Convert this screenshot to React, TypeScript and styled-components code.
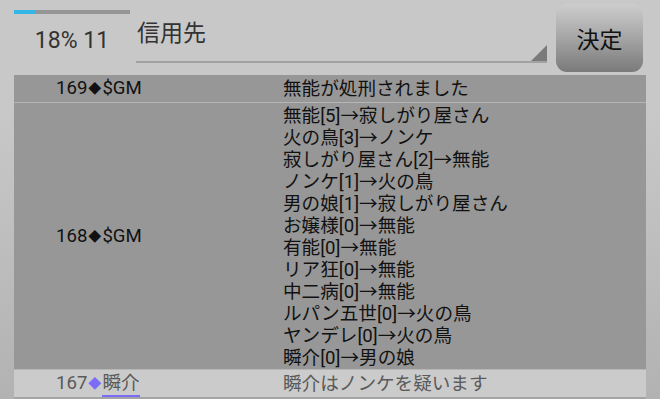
import React from "react";
import styled, { createGlobalStyle } from "styled-components";

const GlobalStyle = createGlobalStyle`
  html, body {
    margin: 0;
    padding: 0;
  }
  body {
    font-family: Roboto, "Noto Sans CJK JP", sans-serif;
    background: #c8c8c8;
  }
`;

const Screen = styled.div`
  width: 660px;
  height: 399px;
  overflow: hidden;
  background: linear-gradient(#c8c8c8 0px, #c8c8c8 110px, #b2b2b2 399px);
`;

const Header = styled.div`
  display: flex;
  align-items: flex-start;
  height: 75px;
  padding: 0 17px 0 14px;
  box-sizing: border-box;
`;

const Status = styled.div`
  width: 116px;
  display: flex;
  flex-direction: column;
  align-items: center;
`;

const ProgressTrack = styled.div`
  width: 100%;
  height: 4px;
  margin-top: 10px;
  background: #959595;
`;

const ProgressFill = styled.div`
  height: 100%;
  background: #33b5e5;
`;

const StatusText = styled.div`
  margin-top: 12px;
  font-size: 23px;
  line-height: 30px;
  color: #333;
`;

const Select = styled.div`
  position: relative;
  flex: 1;
  margin: 16px 9px 0 6px;
  height: 47px;
  border-bottom: 2px solid #a2a2a2;
  box-sizing: border-box;
  padding-left: 1px;
  font-size: 23px;
  line-height: 36px;
  color: #333;

  &::after {
    content: "";
    position: absolute;
    right: 0;
    bottom: 0;
    border-style: solid;
    border-width: 0 0 16px 16px;
    border-color: transparent transparent #7a7a7a transparent;
  }
`;

const Button = styled.div`
  width: 87px;
  height: 68px;
  margin-top: 4px;
  border-radius: 11px;
  background: linear-gradient(#cdcdcd, #a9a9a9 45%, #7a7a7a);
  display: flex;
  align-items: center;
  justify-content: center;
  font-size: 23px;
  color: #111;
`;

const List = styled.div`
  margin: 0 14px;
`;

const Row = styled.div<{ $tone: "dark" | "light" }>`
  display: grid;
  grid-template-columns: 269px 1fr;
  align-items: center;
  font-size: 18.6px;
  background: ${(p) => (p.$tone === "dark" ? "#979797" : "#cbcbcb")};
  color: ${(p) => (p.$tone === "dark" ? "#111" : "#5a5a5a")};
  border-bottom: ${(p) =>
    p.$tone === "dark" ? "1px solid #b6b6b6" : "2px solid #a4a4a4"};
`;

const Speaker = styled.div`
  padding-left: 42px;
  line-height: 26px;
  white-space: nowrap;
`;

const Diamond = styled.span<{ $color?: string }>`
  font-size: 13px;
  margin: 0 1px;
  vertical-align: 1px;
  color: ${(p) => p.$color || "inherit"};
`;

const Name = styled.span<{ $linked?: boolean }>`
  ${(p) =>
    p.$linked
      ? `border-bottom: 2px solid #7b6cf5; padding-bottom: 1px;`
      : ""}
`;

const Messages = styled.div<{ $multi?: boolean }>`
  line-height: ${(p) => (p.$multi ? "22px" : "26px")};
  padding: ${(p) => (p.$multi ? "2px 0 0" : "0")};
  white-space: nowrap;
`;

const votes = [
  "無能[5]→寂しがり屋さん",
  "火の鳥[3]→ノンケ",
  "寂しがり屋さん[2]→無能",
  "ノンケ[1]→火の鳥",
  "男の娘[1]→寂しがり屋さん",
  "お嬢様[0]→無能",
  "有能[0]→無能",
  "リア狂[0]→無能",
  "中二病[0]→無能",
  "ルパン五世[0]→火の鳥",
  "ヤンデレ[0]→火の鳥",
  "瞬介[0]→男の娘",
];

export default function App() {
  const progress = 18;
  return (
    <Screen>
      <GlobalStyle />
      <Header>
        <Status>
          <ProgressTrack>
            <ProgressFill style={{ width: `${progress}%` }} />
          </ProgressTrack>
          <StatusText>{progress}% 11</StatusText>
        </Status>
        <Select>信用先</Select>
        <Button>決定</Button>
      </Header>
      <List>
        <Row $tone="dark">
          <Speaker>
            169<Diamond>◆</Diamond>$GM
          </Speaker>
          <Messages>無能が処刑されました</Messages>
        </Row>
        <Row $tone="dark">
          <Speaker>
            168<Diamond>◆</Diamond>$GM
          </Speaker>
          <Messages $multi>
            {votes.map((v) => (
              <div key={v}>{v}</div>
            ))}
          </Messages>
        </Row>
        <Row $tone="light">
          <Speaker>
            167<Diamond $color="#7b6cf5">◆</Diamond>
            <Name $linked>瞬介</Name>
          </Speaker>
          <Messages>瞬介はノンケを疑います</Messages>
        </Row>
      </List>
    </Screen>
  );
}
